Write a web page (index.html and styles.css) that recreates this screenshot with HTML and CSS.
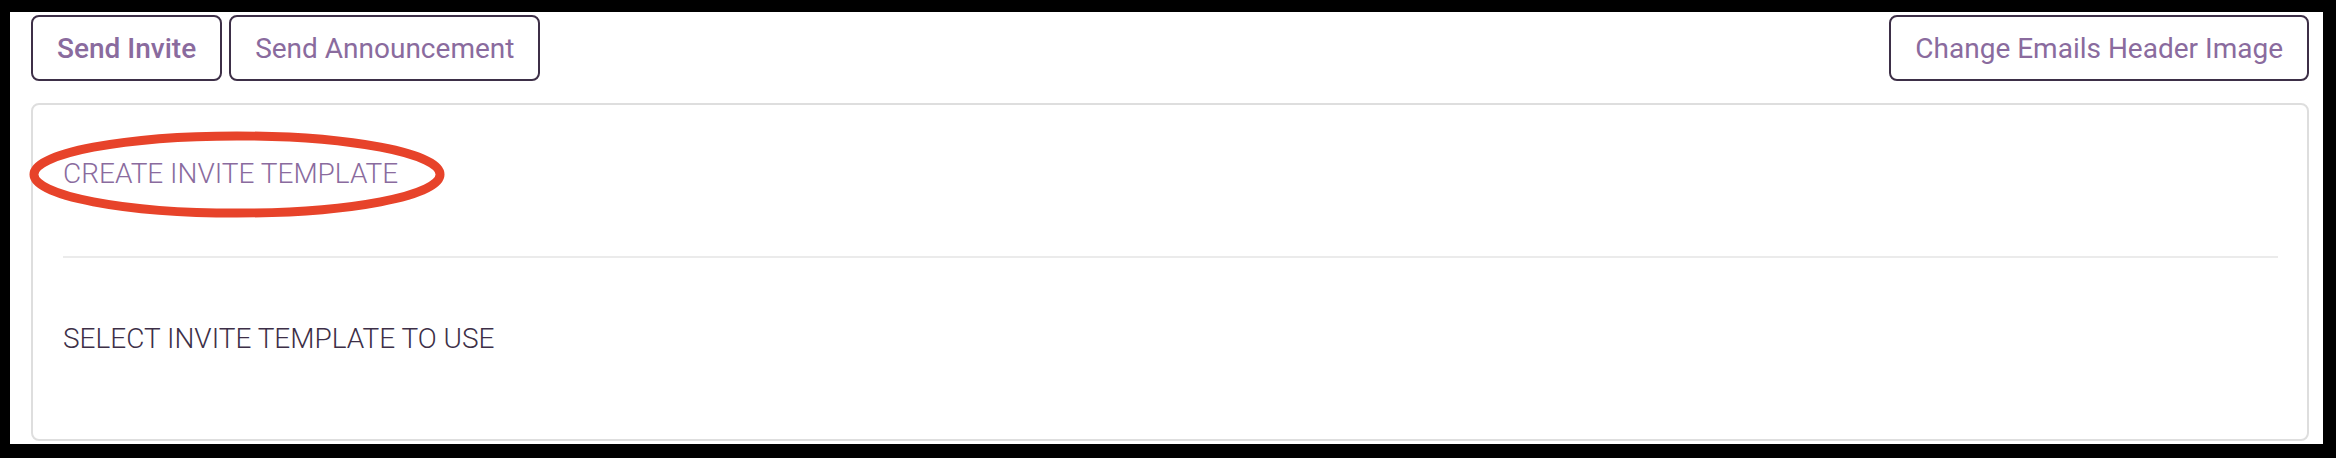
FILE: index.html
```html
<!DOCTYPE html>
<html lang="en">
<head>
<meta charset="utf-8">
<title>Invites</title>
<link rel="stylesheet" href="styles.css">
</head>
<body>
<div class="frame">
  <div class="toolbar">
    <div class="btn-group">
      <button class="btn btn-active">Send Invite</button>
      <button class="btn">Send Announcement</button>
    </div>
    <button class="btn">Change Emails Header Image</button>
  </div>
  <div class="panel">
    <div class="create-row">
      <a class="create-link" href="#">CREATE INVITE TEMPLATE<svg class="circle-mark" viewBox="0 0 420 90" preserveAspectRatio="none" aria-hidden="true"><ellipse cx="210" cy="45" rx="204" ry="39" fill="none" stroke="#e7432a" stroke-width="9"/></svg></a>
    </div>
    <hr class="divider">
    <div class="select-title">SELECT INVITE TEMPLATE TO USE</div>
  </div>
</div>
</body>
</html>
```
FILE: styles.css
```css
html, body {
  margin: 0;
  padding: 0;
  background: #000;
}
body {
  width: 2336px;
  height: 458px;
  padding: 12px 13px 14px 10px;
  box-sizing: border-box;
  font-family: Roboto, "Liberation Sans", sans-serif;
}
.frame {
  background: #fff;
  height: 432px;
  box-sizing: border-box;
  padding: 3px 14px 3px 21px;
  display: flex;
  flex-direction: column;
  gap: 22px;
}
.toolbar {
  display: flex;
  justify-content: space-between;
  align-items: center;
}
.btn-group {
  display: flex;
  gap: 7px;
}
.btn {
  height: 66px;
  box-sizing: border-box;
  border: 2px solid #3d2f47;
  border-radius: 8px;
  background: #fff;
  color: #8a6b9e;
  font-family: Roboto, "Liberation Sans", sans-serif;
  font-size: 28px;
  font-weight: 400;
  padding: 0 24px;
  display: inline-flex;
  align-items: center;
  cursor: pointer;
}
.btn-active {
  font-weight: 500;
}
.panel {
  flex: 1;
  border: 2px solid #dedede;
  border-radius: 8px;
  padding: 52px 29px 0 30px;
  box-sizing: border-box;
}
.create-row {
  line-height: 34px;
}
.create-link {
  position: relative;
  display: inline-block;
  color: #8a6b9e;
  text-decoration: none;
  font-size: 28px;
  font-weight: 300;
}
.circle-mark {
  position: absolute;
  left: -35px;
  top: -27px;
  width: 418px;
  height: 89px;
  overflow: visible;
}
.divider {
  border: 0;
  height: 2px;
  background: #ebebeb;
  margin: 61px 0 64px;
}
.select-title {
  color: #3d2f47;
  font-size: 28px;
  font-weight: 300;
  line-height: 33px;
}
```
